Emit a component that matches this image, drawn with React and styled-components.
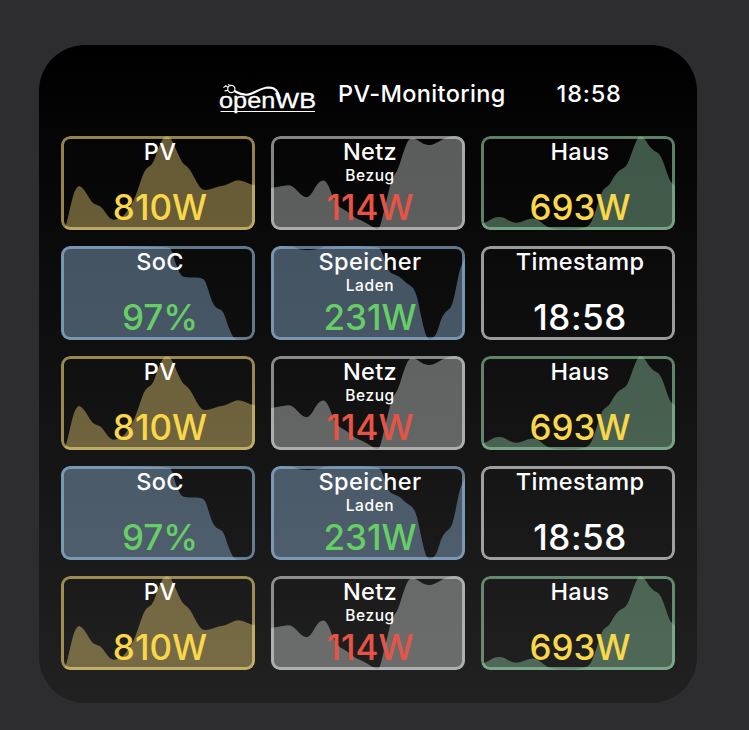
import styled, { createGlobalStyle } from 'styled-components';

const GlobalStyle = createGlobalStyle`
  body {
    margin: 0;
    background-color: #2d2d2f;
    font-family: Inter, "Liberation Sans", sans-serif;
  }
`;

const Page = styled.div`
  box-sizing: border-box;
  min-height: 730px;
  padding: 45px 52px 27px 39px;
  background-color: #2d2d2f;
`;

const Widget = styled.main`
  box-sizing: border-box;
  width: 658px;
  height: 658px;
  padding: 0 22px;
  border-radius: 46px;
  background: linear-gradient(#000, #212121);
  color: #fff;
`;

const Header = styled.header`
  display: flex;
  align-items: center;
  height: 91px;
  padding-left: 156px;
`;

const Logo = styled.svg`
  flex: none;
  width: 104px;
  height: 36px;
  margin-top: 16px;
`;

const HeaderText = styled.span`
  margin-top: 6px;
  margin-left: ${props => props.$gap}px;
  font-size: 23.5px;
  font-weight: 450;
  letter-spacing: ${props => props.$spacing}px;
  line-height: 28px;
  white-space: nowrap;
`;

const Grid = styled.section`
  display: grid;
  grid-template-columns: repeat(3, 194px);
  grid-auto-rows: 94px;
  gap: 16px;
`;

const Card = styled.article`
  display: grid;
  grid-template-areas: "stack";
  grid-template-rows: 94px;
  border-radius: 9px;
  overflow: hidden;
`;

const Chart = styled.svg`
  grid-area: stack;
  width: 194px;
  height: 94px;
  fill: rgb(${props => props.$color} / 0.4);
`;

const CardBody = styled.div`
  grid-area: stack;
  z-index: 1;
  box-sizing: border-box;
  display: flex;
  flex-direction: column;
  align-items: center;
  padding-left: 4px;
  border: 3px solid rgb(${props => props.$color} / 0.59);
  border-radius: 9px;
`;

const Title = styled.span`
  flex: none;
  font-size: 23.5px;
  font-weight: 450;
  letter-spacing: 0.35px;
  line-height: 26px;
`;

const Subtitle = styled.span`
  flex: none;
  height: 20px;
  font-size: 15.5px;
  font-weight: 450;
  letter-spacing: 0.6px;
  line-height: 21px;
`;

const Value = styled.strong`
  flex: none;
  font-size: 35px;
  font-weight: ${props => props.$weight || 450};
  letter-spacing: ${props => props.$spacing || 0}px;
  line-height: 45px;
  color: ${props => props.$color};
`;

const YELLOW = '#f9d74a';
const RED = '#e75445';
const GREEN = '#67ce67';

const cards = {
  pv: {
    title: 'PV',
    value: '810W',
    valueColor: YELLOW,
    color: '248 221 126',
    points: [
      [3, 94], [6, 86], [9, 72], [13, 56], [17, 49.5], [21, 51], [26, 58], [31, 67], [36, 69],
      [40, 70.5], [44, 76], [49, 83], [54, 84], [62, 81], [69, 71], [74, 62], [79, 47], [84, 33],
      [91, 29], [94, 22], [98, 10], [102, 2], [106, 0], [110, 2], [114, 11], [121, 27], [127, 31],
      [131, 37], [136, 47], [141, 54], [148, 54], [157, 50.5], [164, 49.5], [171, 46], [176, 44],
      [182, 45], [190, 48.5], [194, 49],
    ],
  },
  netz: {
    title: 'Netz',
    subtitle: 'Bezug',
    value: '114W',
    valueColor: RED,
    color: '221 224 223',
    points: [
      [0, 52], [6, 51], [14, 49.5], [19, 49], [24, 52], [29, 58], [35, 62], [40, 59], [46, 48],
      [51, 44], [55, 45], [59, 53], [63, 65], [68, 71], [76, 75], [84, 82], [92, 85], [100, 90],
      [105, 93], [108, 93], [110, 87], [113, 75], [117, 58], [121, 42], [127, 34], [132, 17],
      [137, 4], [141, 1.5], [147, 4], [152, 8], [160, 9.5], [167, 6], [174, 2], [181, 0], [194, 0],
    ],
  },
  haus: {
    title: 'Haus',
    value: '693W',
    valueColor: YELLOW,
    color: '152 213 171',
    points: [
      [0, 88], [6, 86], [12, 82], [18, 80.5], [24, 82], [29, 85.5], [35, 87], [42, 85.5],
      [48, 82.5], [56, 82.5], [62, 88], [69, 92.5], [80, 93.5], [95, 93.5], [108, 91], [113, 80],
      [118, 64], [122, 53], [128, 50], [132, 42], [138, 34], [144, 32], [148, 25], [153, 10],
      [157, 1.5], [160, 0], [164, 3], [168, 10], [173, 15], [178, 17], [182, 25], [187, 40],
      [190, 47], [194, 49],
    ],
  },
  soc: {
    title: 'SoC',
    value: '97%',
    valueColor: GREEN,
    color: '156 196 232',
    points: [
      [0, 0], [108, 0], [111, 5], [115, 19], [119, 28], [122, 31], [130, 31.5], [139, 31.5],
      [144, 34], [147, 43], [151, 56], [155, 62], [161, 64], [164, 70], [167, 80], [171, 89],
      [174, 94], [194, 94],
    ],
  },
  speicher: {
    title: 'Speicher',
    subtitle: 'Laden',
    value: '231W',
    valueColor: GREEN,
    color: '156 196 232',
    points: [
      [0, 0], [22, 0], [28, 3.5], [36, 4], [46, 3.5], [52, 1], [58, 0], [106, 0], [111, 5],
      [115, 20], [119, 27], [128, 30], [135, 37], [142, 41], [146, 50], [149, 65], [152, 79],
      [155, 90], [158, 93.5], [162, 92], [166, 87], [170, 73], [174, 66], [180, 62], [183, 52],
      [186, 37], [189, 22], [194, 12],
    ],
  },
  timestamp: {
    title: 'Timestamp',
    value: '18:58',
    valueColor: '#fff',
    color: '255 255 255',
    spacing: 0.5,
    weight: 500,
  },
};

const layout = [
  'pv', 'netz', 'haus',
  'soc', 'speicher', 'timestamp',
  'pv', 'netz', 'haus',
  'soc', 'speicher', 'timestamp',
  'pv', 'netz', 'haus',
];

/**
 * Build a closed area path, smoothed through the midpoints of the samples
 * @param {number[][]} points - Chart samples in card coordinates
 * @returns {string} Path data
 */
const areaPath = (points) => {
  const curve = points.slice(1).map(([x, y], i) => {
    const [px, py] = points[i];
    return `Q${px} ${py} ${(px + x) / 2} ${(py + y) / 2}`;
  });
  const [lastX, lastY] = points[points.length - 1];
  return `M${points[0][0]} 94 L${points[0].join(' ')} ${curve.join(' ')} L${lastX} ${lastY} V94 Z`;
};

const OpenWBLogo = () => (
  <Logo viewBox="0 0 104 36" fill="none" stroke="#fff" aria-label="openWB">
    <text
      x="2"
      y="26.8"
      fill="#fff"
      stroke="#fff"
      strokeWidth="0.3"
      fontFamily="'Liberation Sans', Arial, sans-serif"
      fontSize="21.5"
      textLength="97"
      lengthAdjust="spacingAndGlyphs"
    >
      openWB
    </text>
    <path d="M3.5 30.5H98" strokeWidth="1" />
    <circle cx="14.3" cy="8" r="3.6" strokeWidth="1.2" />
    <path d="M11.2 6.3L8.2 4.6M10.9 9.4L7.6 9.9M12.6 4.2L11 3.4M8.6 5L6.4 6.6" strokeWidth="1.1" />
    <path d="M17.4 10C22 12.5 26 14.3 31 13.6C38 12.5 42 7 52 6.5C60 6.5 61 12 63 18" strokeWidth="2.1" />
  </Logo>
);

const MetricCard = ({ title, subtitle, value, valueColor, color, points, spacing, weight }) => (
  <Card>
    {points && (
      <Chart viewBox="0 0 194 94" $color={color}>
        <path d={areaPath(points)} />
      </Chart>
    )}
    <CardBody $color={color}>
      <Title>{title}</Title>
      <Subtitle>{subtitle}</Subtitle>
      <Value $color={valueColor} $spacing={spacing} $weight={weight}>{value}</Value>
    </CardBody>
  </Card>
);

const App = () => (
  <>
    <GlobalStyle />
    <Page>
      <Widget>
        <Header>
          <OpenWBLogo />
          <HeaderText $gap={17} $spacing={0.35}>PV-Monitoring</HeaderText>
          <HeaderText $gap={51} $spacing={0.8}>18:58</HeaderText>
        </Header>
        <Grid>
          {layout.map((name, index) => (
            <MetricCard key={index} {...cards[name]} />
          ))}
        </Grid>
      </Widget>
    </Page>
  </>
);

export default App;
